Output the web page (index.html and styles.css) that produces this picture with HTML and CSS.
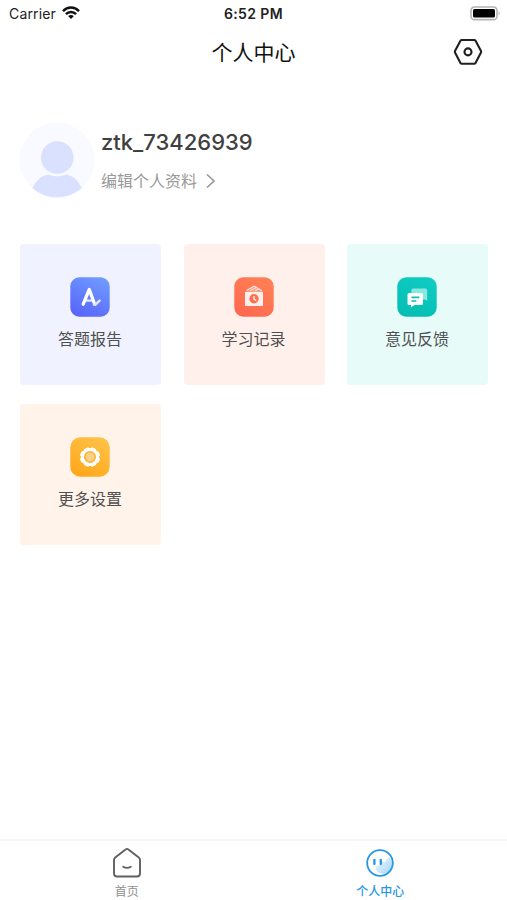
FILE: index.html
```html
<!DOCTYPE html>
<html lang="zh-CN">
<head>
<meta charset="utf-8">
<meta name="viewport" content="width=device-width, initial-scale=1">
<title>个人中心</title>
<link rel="stylesheet" href="styles.css">
</head>
<body>
<div class="app">
  <div class="status">
    <div class="status-left"><span class="carrier">Carrier</span>
      <svg width="18" height="13" viewBox="0 0 18 13"><g fill="none" stroke="#111" stroke-width="2.5"><path d="M1 5.1C5.6.4 12.4.4 17 5.1"/><path d="M3.9 8.1C6.8 5.2 11.2 5.2 14.1 8.1"/></g><path d="M9 13 6.1 10.1Q9 7.9 11.9 10.1Z" fill="#111"/></svg>
    </div>
    <div class="time">6:52 PM</div>
    <div class="status-right">
      <svg width="31" height="15" viewBox="0 0 31 15"><rect x="1" y="1" width="26" height="12.6" rx="3.4" fill="#fff" stroke="#b4b4b4" stroke-width="1.6"/><rect x="3" y="3" width="22" height="8.6" rx="1.5" fill="#000"/><path d="M28.6 5.2Q31 7.3 28.6 9.4Z" fill="#b4b4b4"/></svg>
    </div>
  </div>
  <header class="nav">
    <h1>个人中心</h1>
    <svg class="hex" width="30" height="28" viewBox="0 0 30 28" fill="none" stroke="#202020" stroke-width="2.1" stroke-linejoin="round"><path d="M8.6 2H21.4Q22 2 22.4 2.6L28 13Q28.4 13.8 28 14.6L22.4 25.2Q22 25.8 21.4 25.8H8.6Q8 25.8 7.6 25.2L2 14.6Q1.6 13.8 2 13L7.6 2.6Q8 2 8.6 2Z"/><circle cx="15" cy="13.9" r="3.5"/></svg>
  </header>
  <section class="profile">
    <svg class="avatar" width="76" height="76" viewBox="0 0 76 76"><circle cx="38" cy="38" r="37.5" fill="#f8faff"/><circle cx="38.3" cy="35.5" r="16.3" fill="#dae1ff"/><path d="M13.5 66.2C16.5 59.5 21.5 54.5 27 53 30.5 52.3 32 54.3 38 54.3S45.5 52.3 49 53C55 54.5 60 59.5 62.5 66.2Q51.5 75.5 38 75.5T13.5 66.2Z" fill="#dae1ff"/></svg>
    <div class="who">
      <div class="name">ztk_73426939</div>
      <div class="edit"><span>编辑个人资料</span><svg width="10" height="16" viewBox="0 0 10 16" fill="none" stroke="#999" stroke-width="1.7"><path d="M1 1.5 8 8 1 14.5"/></svg></div>
    </div>
  </section>
  <main class="grid">
    <div class="card blue">
      <svg width="40" height="40" viewBox="0 0 40 40"><defs><linearGradient id="gb" x1=".8" y1="0" x2=".3" y2="1"><stop stop-color="#709bff"/><stop offset="1" stop-color="#5866fa"/></linearGradient></defs><rect x=".3" y=".3" width="39.4" height="39.4" rx="9" fill="url(#gb)"/><g fill="none" stroke="#fff" stroke-linecap="round" stroke-linejoin="round"><path d="M13.2 27.2 19.3 12.5 24.2 26" stroke-width="3.3"/><path d="M17 23.6H21" stroke-width="2.4" stroke="#e3e9ff"/><path d="M24 27.6 25.2 27.8 29.6 23.6" stroke-width="2.6" stroke="#dce4ff"/></g></svg>
      <span>答题报告</span>
    </div>
    <div class="card red">
      <svg width="40" height="40" viewBox="0 0 40 40"><defs><linearGradient id="gr" x1=".8" y1="0" x2=".2" y2="1"><stop stop-color="#ff8055"/><stop offset="1" stop-color="#ff6850"/></linearGradient></defs><rect x=".3" y=".3" width="39.4" height="39.4" rx="9" fill="url(#gr)"/><path d="M12 14.5 20.5 9.5 28.5 13.5V15H12Z" fill="#ff9a80"/><path d="M12.5 13.5 20 9.2 23 10.5M16 13.8 22.5 10.5 28 13.7M21 14 24.5 12" fill="none" stroke="#ffe4dc" stroke-width="1.1"/><path d="M11 15H29V29H11Z" fill="#fff0ec"/><circle cx="20" cy="21.8" r="4.7" fill="#ff704f"/><path d="M20 19V22.2L22.2 23.5" fill="none" stroke="#fff" stroke-width="1.3"/></svg>
      <span>学习记录</span>
    </div>
    <div class="card green">
      <svg width="40" height="40" viewBox="0 0 40 40"><defs><linearGradient id="gg" x1=".7" y1="0" x2=".3" y2="1"><stop stop-color="#10cbc1"/><stop offset="1" stop-color="#04beb4"/></linearGradient></defs><rect x=".3" y=".3" width="39.4" height="39.4" rx="9" fill="url(#gg)"/><path d="M16 11.5H28.5Q30.2 11.5 30.2 13.2V23.8L28 22.4H16Q14.4 22.4 14.4 20.7V13.2Q14.4 11.5 16 11.5Z" fill="#8ae8e1"/><path d="M12 16H24.5Q26 16 26 17.5V26.5Q26 28 24.5 28H17.5L14 30.5V28H12Q10.5 28 10.5 26.5V17.5Q10.5 16 12 16Z" fill="#fff"/><path d="M14.5 20.3H22.3M14.5 24H19.3" stroke="#08bfb6" stroke-width="1.7"/></svg>
      <span>意见反馈</span>
    </div>
    <div class="card orange">
      <svg width="40" height="40" viewBox="0 0 40 40"><defs><linearGradient id="go" x1=".8" y1="0" x2=".3" y2="1"><stop stop-color="#ffc247"/><stop offset="1" stop-color="#ffa81d"/></linearGradient></defs><rect x=".3" y=".3" width="39.4" height="39.4" rx="10" fill="url(#go)"/><path d="M18 10.8 20 11.8 22 10.8 25.5 12.2 26 14.3 28.2 15 29.5 18 28.4 20 29.5 22.2 28.2 25.2 26 26 25.2 28 22 29.3 20 28.2 18 29.3 14.8 28 14 26 11.8 25.2 10.5 22.2 11.6 20 10.5 18 11.8 15 14 14.2 14.8 12.2Z" fill="#fff" stroke="#fff" stroke-linejoin="round"/><circle cx="20" cy="20" r="5.2" fill="#f8d286" stroke="#ffb333" stroke-width="1.6"/></svg>
      <span>更多设置</span>
    </div>
  </main>
  <footer class="tabs">
    <div class="tab">
      <svg width="30" height="32" viewBox="0 0 30 32" fill="none" stroke="#606060" stroke-width="1.9" stroke-linecap="round" stroke-linejoin="round"><path d="M13.6 2.4Q15 1.4 16.4 2.4L26.8 10.5Q28 11.5 28 13V26.5Q28 29.5 25 29.5H5Q2 29.5 2 26.5V13Q2 11.5 3.2 10.5Z"/><path d="M11.2 19.7Q15 22 18.8 19.7"/></svg>
      <span>首页</span>
    </div>
    <div class="tab active">
      <svg width="30" height="32" viewBox="0 0 30 32"><defs><linearGradient id="gf" x1="0" y1="0" x2="1" y2="1"><stop stop-color="#eef8ff"/><stop offset="1" stop-color="#a4d6fa"/></linearGradient></defs><circle cx="15" cy="16" r="12.8" fill="#fff"/><path d="M11 19.5Q13 18.5 15 17.5V15H20Q21 11.5 24.5 10.2 30 17 24.5 24.2 18.5 29 12.5 25Q10 22.5 11 19.5Z" fill="url(#gf)"/><circle cx="15" cy="16" r="12.8" fill="none" stroke="#2697e5" stroke-width="1.8"/><path d="M9.4 12.8V17M15.8 12.8V17" stroke="#2697e5" stroke-width="2.3" stroke-linecap="round"/></svg>
      <span>个人中心</span>
    </div>
  </footer>
</div>
</body>
</html>
```
FILE: styles.css
```css
* { box-sizing: border-box; }
body { margin: 0; background: #fff; font-family: Inter, "Noto Sans CJK SC", sans-serif; color: #222; }
svg { display: block; flex: none; }
.app { width: 507px; height: 900px; display: flex; flex-direction: column; overflow: hidden; }
.status { height: 27px; padding: 0 6px 0 9px; display: grid; grid-template-columns: 1fr auto 1fr; align-items: center; }
.status-left { display: flex; align-items: center; gap: 6px; font-size: 14px; letter-spacing: .15px; line-height: 20px; }
.status-left svg { margin-top: -2px; }
.time { font-size: 14px; font-weight: 600; line-height: 20px; letter-spacing: .4px; margin-left: -3px; }
.status-right { display: flex; justify-content: flex-end; }
.nav { height: 50px; padding: 0 24px; display: grid; grid-template-columns: 30px 1fr 30px; align-items: center; }
h1 { grid-column: 2; margin: 2px 0 0; text-align: center; font-size: 21px; line-height: 30px; font-weight: 400; color: #111; }
.profile { margin: 45px 0 0 19px; height: 76px; display: flex; gap: 6px; }
.who { padding-top: 5px; }
.name { font-size: 22px; line-height: 30px; font-weight: 500; color: #404040; }
.edit { display: flex; align-items: center; gap: 9px; margin-top: 12px; font-size: 16px; line-height: 24px; color: #999; }
.grid { margin: 46px 19px 0 20px; display: grid; grid-template-columns: repeat(3, 141px); justify-content: space-between; row-gap: 19px; }
.card { height: 141px; border-radius: 4px; padding: 33px 1px 0 0; display: flex; flex-direction: column; align-items: center; gap: 10px; font-size: 16px; line-height: 24px; color: #505050; }
.blue { background: #f0f3ff; }
.red { background: #fff0ec; }
.green { background: #e7fbf9; }
.orange { background: #fff3ea; }
.tabs { margin-top: auto; height: 61px; border-top: 2px solid #f6f6f6; display: grid; grid-template-columns: 1fr 1fr; }
.tab { display: flex; flex-direction: column; align-items: center; padding-top: 6px; gap: 4px; font-size: 12px; line-height: 18px; color: #909090; }
.active { color: #2697e5; font-weight: 500; }
```
